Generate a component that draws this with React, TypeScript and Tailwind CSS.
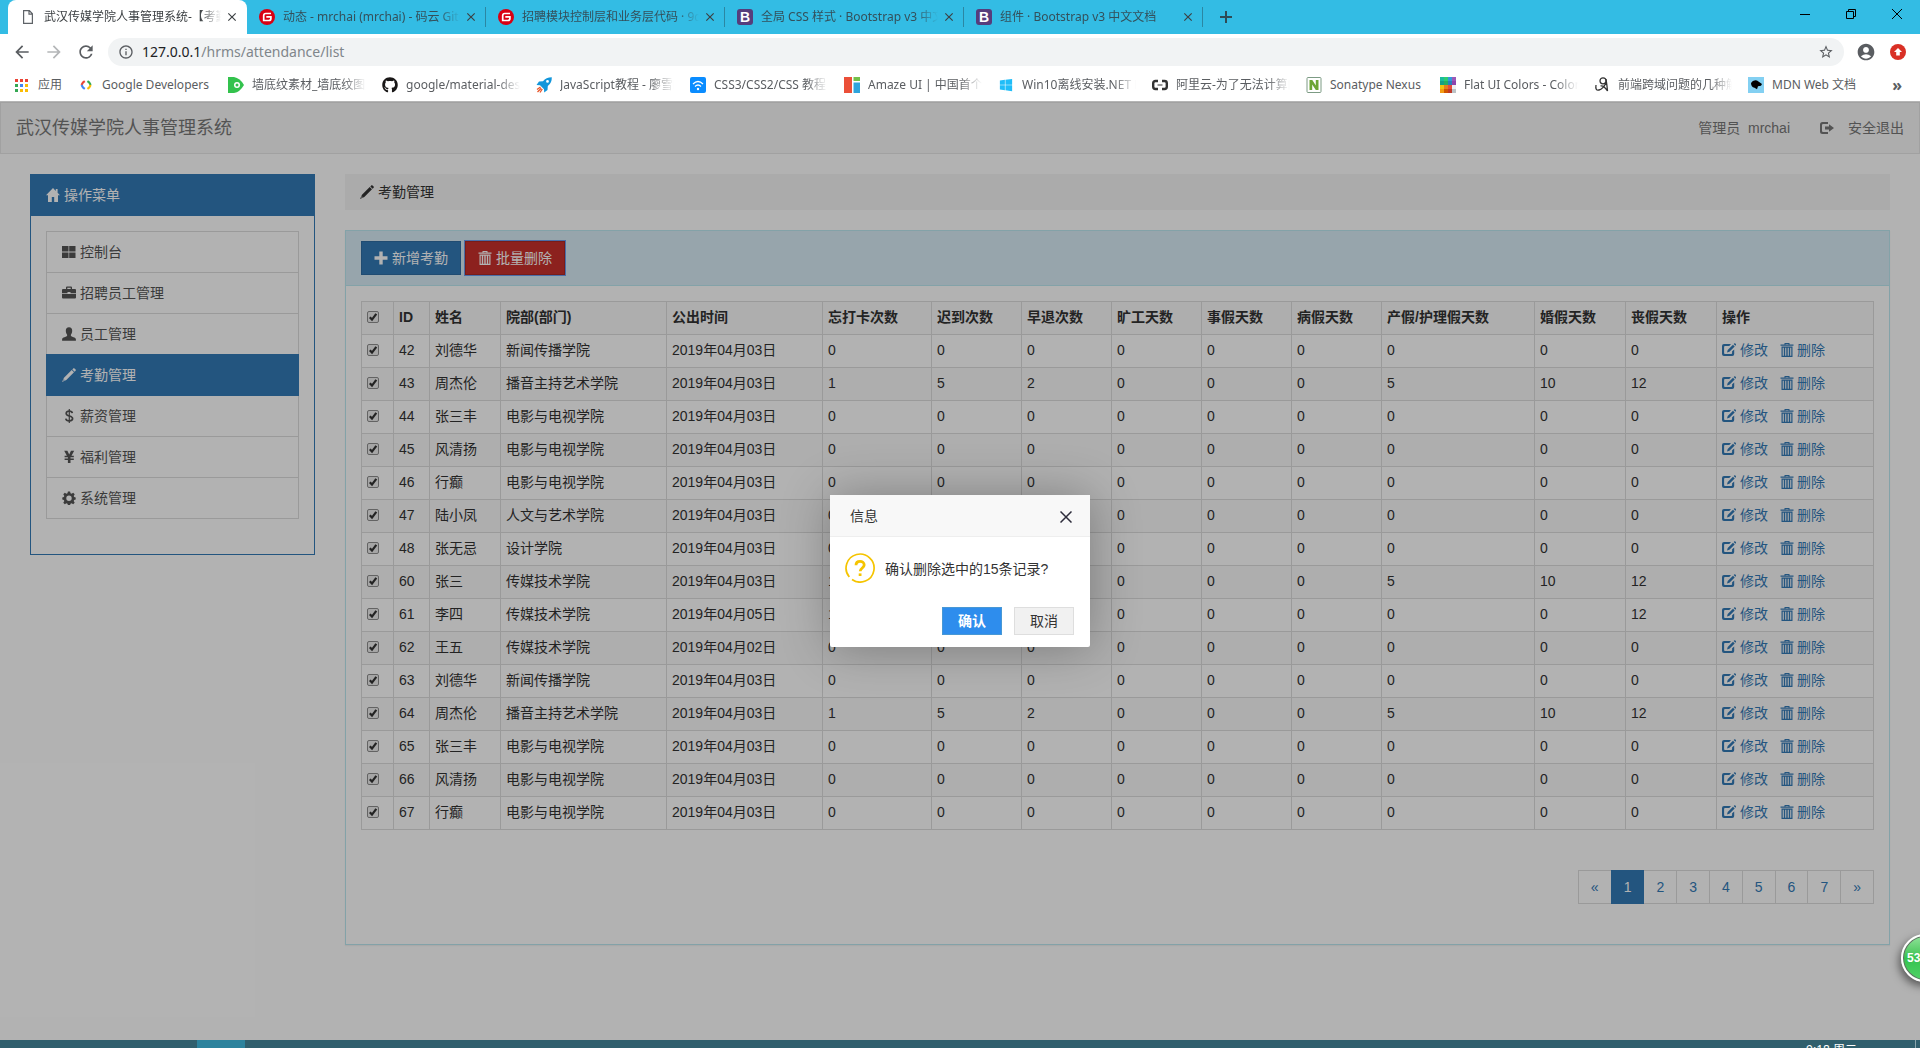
import type { ReactNode } from "react";
import { FaGithub, FaWindows } from "react-icons/fa";
import { MdAccountCircle, MdArrowBack, MdArrowForward, MdClose, MdInfoOutline, MdRefresh, MdStarBorder } from "react-icons/md";

/* ---------- icons ---------- */

function Glyph({ children, className = "" }: { children: ReactNode; className?: string }) {
  return (
    <svg viewBox="0 0 14 14" className={`inline-block size-3.5 shrink-0 ${className}`} fill="currentColor" aria-hidden="true">
      {children}
    </svg>
  );
}

const HomeIcon = () => (
  <Glyph>
    <path d="M7 0 0 7.2h2V14h3.800V9h2.400v5H12V7.200h2L11.600 4.700V1H9.800v1.900z" />
  </Glyph>
);
const GridIcon = () => (
  <Glyph>
    <path d="M0 1h6.500v5.600H0zM7.200 1H13.500v5.600H7.200zM0 7.400h6.500V13H0zM7.200 7.400H13.500V13H7.200z" />
  </Glyph>
);
const BriefcaseIcon = () => (
  <Glyph>
    <path d="M4 3V1.500Q4 .5 5 .5h4q1 0 1 1V3h3q1 0 1 1v3.200H8.500V6h-3v1.200H0V4q0-1 1-1zm1.300 0h3.400V1.700H5.300zM0 8h14v3.500q0 1-1 1H1q-1 0-1-1z" />
  </Glyph>
);
const UserIcon = () => (
  <Glyph>
    <path d="M7 .2c2.200 0 3.200 1.400 3.200 3.600 0 2-.8 3.200-1.300 4v1.300c.8.9 4.800 1.300 5 3.200V13.700H.1V12.300c.2-1.900 4.200-2.300 5-3.200V7.800C4.600 7 3.800 5.800 3.800 3.800 3.800 1.600 4.800.2 7 .2z" />
  </Glyph>
);
const PencilIcon = () => (
  <Glyph>
    <path d="M11.300.4q.6-.6 1.200 0l1.100 1.100q.6.6 0 1.200l-1 1-2.300-2.300zM9.700 2 12 4.300 4.300 12 0 14l2-4.300zM1.800 11.300l-.6 1.500 1.500-.6z" />
  </Glyph>
);
const CogIcon = () => (
  <Glyph>
    <path
      fillRule="evenodd"
      d="M5.900.5h2.200l.4 1.800 1.100.5 1.600-1 1.500 1.500-1 1.600.5 1.100 1.500.4v2.200l-1.500.4-.5 1.100 1 1.600-1.500 1.500-1.600-1-1.100.5-.4 1.300H5.900l-.4-1.300-1.100-.5-1.600 1-1.500-1.500 1-1.600-.5-1.100L.3 8.600V6.400L1.800 6l.5-1.100-1-1.600 1.500-1.500 1.600 1 1.100-.5zM7 4.500a2.700 2.700 0 1 0 0 5.400 2.700 2.700 0 1 0 0-5.400z"
    />
  </Glyph>
);
const DollarIcon = () => (
  <Glyph>
    <g fill="none" stroke="currentColor" strokeWidth="1.700">
      <path d="M10.300 4.200C10.100 2.800 9 2.100 7.200 2.100S4.200 3 4.200 4.400C4.200 7.800 10.600 6.200 10.600 9.600c0 1.400-1.200 2.300-3.200 2.300S4 11.200 3.800 9.600" />
      <path d="M7.300 0v14" strokeWidth="1.200" />
    </g>
  </Glyph>
);
const YenIcon = () => (
  <Glyph>
    <path d="M2.200.8h3.200L7.200 4.500 9 .8h3.200L9.500 5.800h2.300V7.300H8.500v1.100h3.300v1.500H8.500V13H5.900V9.900H2.600V8.400h3.300V7.300H2.600V5.800h2.300z" />
  </Glyph>
);
const PlusIcon = () => (
  <Glyph>
    <path d="M5.300.5h3.400v4.800H13.500v3.400H8.700V13.500H5.300V8.700H.5V5.300h4.800z" />
  </Glyph>
);
const TrashIcon = () => (
  <Glyph>
    <path fillRule="evenodd" d="M4.500 0h5v1.500H13.500v1.200H.5V1.500h4zM5.500.9v.6h3V.9zM1.500 3.600h11V14h-11zM2.700 4.800v8h1.100v-8zm2.500 0v8h1.100v-8zm2.500 0v8h1.100v-8zm2.500 0v8h1.100v-8z" />
  </Glyph>
);
const EditIcon = () => (
  <Glyph>
    <path d="M2 1h7L7.300 3H3q-.9 0-.9.900v6.200q0 .9.900.9h6.200q.9 0 .9-.9V8.300L12.200 6.500V11q0 2-2 2H2q-2 0-2-2V3q0-2 2-2z" />
    <path d="M11 1.800 12.700 3.500 7.400 8.800 5 9.500l.7-2.400zM11.700 1.100l.8-.8q.3-.3.600 0l1 1q.3.300 0 .6l-.8.800z" />
  </Glyph>
);
const LogOutIcon = () => (
  <Glyph>
    <path d="M2.500 1H8v2H3.200Q2 3 2 4v6q0 1 1.200 1H8v2H2.500Q0 13 0 10.500v-7Q0 1 2.500 1z" />
    <path d="M9 3.200 14 7l-5 3.800V8.500H5v-3h4z" />
  </Glyph>
);

function GiteeIcon() {
  return (
    <svg viewBox="0 0 16 16" className="size-4" aria-hidden="true">
      <circle cx="8" cy="8" r="8" fill="#d90013" />
      <path d="M12 4.500H6.800Q4.700 4.500 4.700 6.600V11.500h5.200q2 0 2-2V7.800H7.300" fill="none" stroke="#fff" strokeWidth="1.700" />
    </svg>
  );
}

function BootstrapIcon() {
  return (
    <span className="grid size-4 place-items-center rounded-[3px] bg-[#563d7c] font-['Liberation_Sans',sans-serif] text-sm leading-4 font-bold text-white">
      B
    </span>
  );
}

function FileIcon() {
  return (
    <svg viewBox="0 0 16 16" className="size-4" fill="none" stroke="#5f6368" strokeWidth="1.200" aria-hidden="true">
      <path d="M3.600 1.600h5.800L12.400 4.800v9.600H3.600zM9 1.600V5.200h3.400" />
    </svg>
  );
}

/* bookmark favicons */
const appColors = ["#ea4335", "#ea4335", "#ea4335", "#34a853", "#4285f4", "#fbbc05", "#34a853", "#fbbc05", "#fbbc05"];
const flatColors = [
  "#1abc9c", "#2ecc71", "#3498db", "#9b59b6",
  "#16a085", "#27ae60", "#2980b9", "#8e44ad",
  "#f1c40f", "#e67e22", "#e74c3c", "#ecf0f1",
  "#f39c12", "#d35400", "#c0392b", "#bdc3c7",
];

function Favicon({ children }: { children: ReactNode }) {
  return (
    <svg viewBox="0 0 16 16" className="size-4 shrink-0" aria-hidden="true">
      {children}
    </svg>
  );
}

const bookmarks: { label: string; width: string; icon: ReactNode; short?: boolean }[] = [
  {
    label: "应用",
    width: "w-16",
    short: true,
    icon: (
      <Favicon>
        {appColors.map((c, i) => (
          <rect key={i} x={1 + (i % 3) * 5} y={2 + Math.floor(i / 3) * 5} width="3" height="3" fill={c} />
        ))}
      </Favicon>
    ),
  },
  {
    label: "Google Developers",
    width: "w-[150px]",
    short: true,
    icon: (
      <Favicon>
        <g fill="none" strokeWidth="2.200">
          <path d="M6.800 4.200 5 5.400 3.500 8" stroke="#ea4335" />
          <path d="M3.500 8 5 10.600l1.800 1.200" stroke="#4285f4" />
          <path d="M9.400 4.200 11.200 5.400 12.700 8" stroke="#34a853" />
          <path d="M12.700 8l-1.500 2.600-1.800 1.200" stroke="#fbbc05" />
        </g>
      </Favicon>
    ),
  },
  {
    label: "墙底纹素材_墙底纹图片",
    width: "w-[154px]",
    icon: (
      <Favicon>
        <path d="M0 0h6q6 1 10 8-4 7-10 8H0z" fill="#33c24d" />
        <circle cx="9" cy="8" r="3" fill="#fff" />
        <circle cx="9" cy="8" r="1.500" fill="#33c24d" />
      </Favicon>
    ),
  },
  { label: "google/material-design", width: "w-[154px]", icon: <FaGithub className="size-4 shrink-0 text-[#191717]" /> },
  {
    label: "JavaScript教程 - 廖雪峰",
    width: "w-[154px]",
    icon: (
      <Favicon>
        <path fillRule="evenodd" d="M15.800.2Q10 .2 7 4.200L3 4.500.500 8l3.500.2 4 4L8.200 15.500 11.500 13l.3-4Q16 6 15.800.2zM11.500 3a1.400 1.400 0 1 1 0 2.800 1.400 1.400 0 1 1 0-2.800z" fill="#1296db" />
        <path d="M4.500 10 1 12.500M5.300 11.200 1.500 15M6.300 12 4 15.500" stroke="#e8562a" strokeWidth="1.300" />
      </Favicon>
    ),
  },
  {
    label: "CSS3/CSS2/CSS 教程",
    width: "w-[154px]",
    icon: (
      <Favicon>
        <rect width="16" height="16" rx="2" fill="#0a8cff" />
        <g fill="none" stroke="#fff" strokeWidth="1.200">
          <path d="M3 7q5-5 10 0M5 9.500q3-3 6 0" />
        </g>
        <circle cx="8" cy="12" r="1.200" fill="#fff" />
      </Favicon>
    ),
  },
  {
    label: "Amaze UI | 中国首个开源",
    width: "w-[154px]",
    icon: (
      <Favicon>
        <path d="M0 0h8v16H0z" fill="#eb4f38" />
        <path d="M9.500 0H16v4H9.500z" fill="#72c04a" />
        <path d="M9.500 5.500H16V16H9.500z" fill="#2fa4dc" />
      </Favicon>
    ),
  },
  { label: "Win10离线安装.NET Fr", width: "w-[154px]", icon: <FaWindows className="size-4 shrink-0 p-px text-[#20bdf8]" /> },
  {
    label: "阿里云-为了无法计算的",
    width: "w-[154px]",
    icon: (
      <Favicon>
        <path d="M6 4H3.500Q1.200 4 1.200 6.200v3.600Q1.200 12 3.500 12H6M10 4h2.500q2.300 0 2.300 2.200v3.600q0 2.200-2.300 2.200H10" fill="none" stroke="#333" strokeWidth="2.400" />
        <path d="M5.500 7.500h5v1h-5z" fill="#333" />
      </Favicon>
    ),
  },
  {
    label: "Sonatype Nexus",
    width: "w-[134px]",
    short: true,
    icon: (
      <Favicon>
        <rect x="1" y=".5" width="14" height="15" rx="1" fill="#fff" stroke="#7c9b84" />
        <path d="M3.500 13V3h2.800l3.500 5.500V3h2.700v10H9.800L6.200 7.500V13z" fill="#6da536" />
      </Favicon>
    ),
  },
  {
    label: "Flat UI Colors - Color",
    width: "w-[154px]",
    icon: (
      <Favicon>
        {flatColors.map((c, i) => (
          <rect key={i} x={(i % 4) * 4} y={Math.floor(i / 4) * 4} width="4" height="4" fill={c} />
        ))}
      </Favicon>
    ),
  },
  {
    label: "前端跨域问题的几种解决",
    width: "w-[154px]",
    icon: (
      <Favicon>
        <g fill="none" stroke="#333" strokeWidth="1.300">
          <circle cx="9" cy="3.800" r="3" />
          <path d="M12 2q1 6 1.500 12-4-6-7-5M2 8q-1 6 3 5t7-7" />
        </g>
      </Favicon>
    ),
  },
  {
    label: "MDN Web 文档",
    width: "w-[130px]",
    short: true,
    icon: (
      <Favicon>
        <rect width="16" height="16" fill="#83d0f2" />
        <path d="M3 6q2-3.500 6-2.500l5 3.500-1 1.800-3 .4-1 3-2.500-1.500Q3 10 3 6z" fill="#000" />
      </Favicon>
    ),
  },
];

/* ---------- browser window ---------- */

const tabs: { title: string; icon: ReactNode; active?: boolean }[] = [
  { title: "武汉传媒学院人事管理系统-【考勤管理】", icon: <FileIcon />, active: true },
  { title: "动态 - mrchai (mrchai) - 码云 Gitee", icon: <GiteeIcon /> },
  { title: "招聘模块控制层和业务层代码 · 9d2", icon: <GiteeIcon /> },
  { title: "全局 CSS 样式 · Bootstrap v3 中文", icon: <BootstrapIcon /> },
  { title: "组件 · Bootstrap v3 中文文档", icon: <BootstrapIcon /> },
];

function BrowserBar() {
  return (
    <header className="border-b border-[#b5b5b5] bg-white font-['Noto_Sans','Noto_Sans_CJK_SC',sans-serif] text-xs text-[#5a5d61]">
      <div className="flex h-[34px] bg-[#33bce4] pl-2">
        {tabs.map((tab) => (
          <div
            key={tab.title}
            className={
              tab.active
                ? "flex w-[239px] items-center rounded-t-lg bg-white pl-3 text-[#3c4043]"
                : "flex w-[239px] items-center pl-3 text-[#34505b]"
            }
          >
            {tab.icon}
            <span className="ml-2 w-[177px] overflow-hidden whitespace-nowrap [mask-image:linear-gradient(to_right,#000_88%,transparent)]">
              {tab.title}
            </span>
            <button type="button" aria-label="关闭标签页" className="ml-1 text-[#3c4043]">
              <MdClose className="size-3.5" />
            </button>
            {!tab.active && <span className="ml-auto h-5 w-px bg-[#2b87a3]" />}
          </div>
        ))}
        <button type="button" aria-label="新标签页" className="ml-4 text-[#2f4b55]">
          <svg viewBox="0 0 14 14" className="size-3.5" stroke="currentColor" strokeWidth="2">
            <path d="M7 1v12M1 7h12" />
          </svg>
        </button>
        <div className="ml-auto flex h-7 text-black">
          <button type="button" aria-label="最小化" className="grid w-[46px] place-items-center">
            <svg viewBox="0 0 10 10" className="size-2.5" stroke="currentColor">
              <path d="M0 5.500h10" />
            </svg>
          </button>
          <button type="button" aria-label="还原" className="grid w-[46px] place-items-center">
            <svg viewBox="0 0 10 10" className="size-2.5" fill="none" stroke="currentColor">
              <path d="M.5 2.500h7v7h-7zM2.500 2.500v-2h7v7h-2" />
            </svg>
          </button>
          <button type="button" aria-label="关闭" className="grid w-[46px] place-items-center">
            <svg viewBox="0 0 10 10" className="size-2.5" stroke="currentColor">
              <path d="M0 0l10 10M10 0 0 10" />
            </svg>
          </button>
        </div>
      </div>

      <div className="flex h-9 items-center pr-3.5 pl-3">
        <button type="button" aria-label="后退" className="mr-3">
          <MdArrowBack className="size-5" />
        </button>
        <button type="button" aria-label="前进" className="mr-3 text-[#b4b6b8]">
          <MdArrowForward className="size-5" />
        </button>
        <button type="button" aria-label="刷新" className="mr-3">
          <MdRefresh className="size-5" />
        </button>
        <div className="flex h-7 flex-1 items-center rounded-full bg-[#f1f3f4] px-2.5">
          <MdInfoOutline className="mr-2 size-4" />
          <p className="flex-1 text-sm text-[#80868b]">
            <span className="text-[#202124]">127.0.0.1</span>/hrms/attendance/list
          </p>
          <MdStarBorder className="size-4" />
        </div>
        <MdAccountCircle className="ml-3 size-5" />
        <svg viewBox="0 0 16 16" className="ml-3.5 size-4">
          <circle cx="8" cy="8" r="8" fill="#d93025" />
          <path d="M8 4l4 4H9.800v3.500H6.200V8H4z" fill="#fff" />
        </svg>
      </div>

      <div className="flex h-[31px] items-center pb-0.5 pl-3.5">
        {bookmarks.map((b) => (
          <a key={b.label} href="#" className={`flex shrink-0 items-center ${b.width}`}>
            {b.icon}
            <span
              className={
                b.short
                  ? "ml-2 whitespace-nowrap"
                  : "ml-2 w-[114px] overflow-hidden whitespace-nowrap [mask-image:linear-gradient(to_right,#000_80%,transparent)]"
              }
            >
              {b.label}
            </span>
          </a>
        ))}
        <span className="ml-auto pr-[18px] text-base leading-4 font-bold">»</span>
      </div>
    </header>
  );
}

/* ---------- page ---------- */

const menu = [
  { label: "控制台", icon: <GridIcon /> },
  { label: "招聘员工管理", icon: <BriefcaseIcon /> },
  { label: "员工管理", icon: <UserIcon /> },
  { label: "考勤管理", icon: <PencilIcon />, active: true },
  { label: "薪资管理", icon: <DollarIcon /> },
  { label: "福利管理", icon: <YenIcon /> },
  { label: "系统管理", icon: <CogIcon /> },
];

const columns = [
  { title: "ID", width: "w-9" },
  { title: "姓名", width: "w-[71px]" },
  { title: "院部(部门)", width: "w-[166px]" },
  { title: "公出时间", width: "w-[156px]" },
  { title: "忘打卡次数", width: "w-[109px]" },
  { title: "迟到次数", width: "w-[90px]" },
  { title: "早退次数", width: "w-[90px]" },
  { title: "旷工天数", width: "w-[90px]" },
  { title: "事假天数", width: "w-[90px]" },
  { title: "病假天数", width: "w-[90px]" },
  { title: "产假/护理假天数", width: "w-[153px]" },
  { title: "婚假天数", width: "w-[91px]" },
  { title: "丧假天数", width: "w-[91px]" },
  { title: "操作", width: "w-[157px]" },
];

const none = [0, 0, 0, 0, 0, 0, 0, 0, 0];
const some = [1, 5, 2, 0, 0, 0, 5, 10, 12];

const records: { id: number; name: string; dept: string; date: string; counts: number[] }[] = [
  { id: 42, name: "刘德华", dept: "新闻传播学院", date: "2019年04月03日", counts: none },
  { id: 43, name: "周杰伦", dept: "播音主持艺术学院", date: "2019年04月03日", counts: some },
  { id: 44, name: "张三丰", dept: "电影与电视学院", date: "2019年04月03日", counts: none },
  { id: 45, name: "风清扬", dept: "电影与电视学院", date: "2019年04月03日", counts: none },
  { id: 46, name: "行癫", dept: "电影与电视学院", date: "2019年04月03日", counts: none },
  { id: 47, name: "陆小凤", dept: "人文与艺术学院", date: "2019年04月03日", counts: none },
  { id: 48, name: "张无忌", dept: "设计学院", date: "2019年04月03日", counts: none },
  { id: 60, name: "张三", dept: "传媒技术学院", date: "2019年04月03日", counts: some },
  { id: 61, name: "李四", dept: "传媒技术学院", date: "2019年04月05日", counts: [1, 0, 0, 0, 0, 0, 0, 0, 12] },
  { id: 62, name: "王五", dept: "传媒技术学院", date: "2019年04月02日", counts: none },
  { id: 63, name: "刘德华", dept: "新闻传播学院", date: "2019年04月03日", counts: none },
  { id: 64, name: "周杰伦", dept: "播音主持艺术学院", date: "2019年04月03日", counts: some },
  { id: 65, name: "张三丰", dept: "电影与电视学院", date: "2019年04月03日", counts: none },
  { id: 66, name: "风清扬", dept: "电影与电视学院", date: "2019年04月03日", counts: none },
  { id: 67, name: "行癫", dept: "电影与电视学院", date: "2019年04月03日", counts: none },
];

function Checkbox({ label }: { label: string }) {
  return (
    <label className="grid size-3">
      <input
        type="checkbox"
        defaultChecked
        aria-label={label}
        className="peer col-start-1 row-start-1 size-3 appearance-none rounded-[2px] border border-[#8f8f8f] bg-[#ececec]"
      />
      <svg viewBox="0 0 12 12" className="invisible col-start-1 row-start-1 size-3 peer-checked:visible" fill="none" stroke="#333" strokeWidth="2.200">
        <path d="M2.800 6.200 5 8.600 9.300 2.800" />
      </svg>
    </label>
  );
}

function AttendanceTable() {
  return (
    <table className="mb-10 w-full table-fixed border-collapse border border-[#ddd] text-left">
      <thead>
        <tr className="bg-[#f9f9f9]">
          <th className="w-8 border border-[#ddd] px-[5px] pt-[5px] pb-[7px]">
            <Checkbox label="全选" />
          </th>
          {columns.map((c) => (
            <th key={c.title} className={`border border-[#ddd] px-[5px] pt-[5px] pb-[7px] font-bold ${c.width}`}>
              {c.title}
            </th>
          ))}
        </tr>
      </thead>
      <tbody>
        {records.map((r) => (
          <tr key={r.id} className="even:bg-[#f9f9f9]">
            <td className="border border-[#ddd] px-[5px] pt-[5px] pb-[7px]">
              <Checkbox label={`选择 ${r.id}`} />
            </td>
            <td className="border border-[#ddd] px-[5px] pt-[5px] pb-[7px]">{r.id}</td>
            <td className="border border-[#ddd] px-[5px] pt-[5px] pb-[7px]">{r.name}</td>
            <td className="border border-[#ddd] px-[5px] pt-[5px] pb-[7px]">{r.dept}</td>
            <td className="border border-[#ddd] px-[5px] pt-[5px] pb-[7px]">{r.date}</td>
            {r.counts.map((n, i) => (
              <td key={i} className="border border-[#ddd] px-[5px] pt-[5px] pb-[7px]">
                {n}
              </td>
            ))}
            <td className="border border-[#ddd] px-[5px] pt-[5px] pb-[7px]">
              <div className="flex gap-3 text-[#337ab7]">
                <a href="#" className="flex items-center gap-1">
                  <EditIcon />
                  修改
                </a>
                <a href="#" className="flex items-center gap-[3px]">
                  <TrashIcon />
                  删除
                </a>
              </div>
            </td>
          </tr>
        ))}
      </tbody>
    </table>
  );
}

function Pagination() {
  return (
    <nav aria-label="分页" className="my-5 flex justify-end">
      <ul className="flex border-l border-[#ddd] text-[#337ab7]">
        {["«", "1", "2", "3", "4", "5", "6", "7", "»"].map((p) => (
          <li key={p}>
            <a
              href="#"
              className={
                p === "1"
                  ? "-ml-px block border border-[#337ab7] bg-[#337ab7] px-3 py-1.5 text-white"
                  : "block border-y border-r border-[#ddd] px-3 py-1.5"
              }
            >
              {p}
            </a>
          </li>
        ))}
      </ul>
    </nav>
  );
}

function ConfirmDialog() {
  return (
    <div role="dialog" aria-label="信息" className="w-[260px] rounded-[2px] bg-white shadow-[1px_1px_50px_rgba(0,0,0,0.3)]">
      <div className="flex h-[42px] items-center justify-between border-b border-[#eee] bg-[#f8f8f8] pr-[18px] pl-5">
        <span>信息</span>
        <button type="button" aria-label="关闭" className="pt-0.5">
          <svg viewBox="0 0 12 12" className="size-3" stroke="#2d2c3b" strokeWidth="1.500">
            <path d="M.5.5l11 11M11.500.5l-11 11" />
          </svg>
        </button>
      </div>
      <div className="flex items-center gap-2.5 px-[15px] pt-4">
        <svg viewBox="0 0 30 30" className="size-[30px]" fill="none" stroke="#f5c400">
          <path d="M4.300 24A14 14 0 1 1 7 26.500" strokeWidth="1.700" />
          <path d="M11 12.200C11 9.500 12.800 8.300 15 8.300s4.200 1.400 4.200 3.700c0 2.900-4 3.200-4 6.300" strokeWidth="2.800" />
          <path d="M13.700 20.400h2.800v2.600h-2.800z" fill="#f5c400" stroke="none" />
        </svg>
        <span className="pt-px">确认删除选中的15条记录?</span>
      </div>
      <div className="flex justify-end gap-3 px-4 pt-6 pb-3">
        <button type="button" className="h-7 w-[60px] border border-[#4898d5] bg-[#2e8ded] font-bold text-white">
          确认
        </button>
        <button type="button" className="h-7 w-[60px] border border-[#dedede] bg-[#f1f1f1]">
          取消
        </button>
      </div>
    </div>
  );
}

export default function App() {
  return (
    <div className="flex min-h-screen flex-col overflow-x-hidden">
      <BrowserBar />

      <div className="relative flex-1 overflow-hidden bg-white font-['Liberation_Sans','Noto_Sans_CJK_SC',sans-serif] text-sm leading-5 text-[#333]">
        {/* Navbar */}
        <nav className="mb-5 flex h-[52px] items-center justify-between border border-[#e7e7e7] bg-[#f8f8f8] px-[15px] text-[#777]">
          <a href="#" className="text-lg">
            武汉传媒学院人事管理系统
          </a>
          <div className="flex items-center">
            <a href="#" className="mr-[30px]">
              管理员&nbsp; mrchai
            </a>
            <a href="#" className="flex items-center gap-3.5">
              <LogOutIcon />
              安全退出
            </a>
          </div>
        </nav>

        <div className="grid grid-cols-12 items-start gap-x-[30px] px-[30px] pb-5">
          {/* Sidebar */}
          <aside className="col-span-2 border border-[#337ab7] bg-white">
            <h3 className="flex h-[41px] items-center gap-1 bg-[#337ab7] px-[15px] pb-0.5 text-white">
              <HomeIcon />
              操作菜单
            </h3>
            <ul className="mx-[15px] mt-[15px] mb-[35px] border border-[#ddd]">
              {menu.map((m) => (
                <li key={m.label} className="border-b border-[#ddd] last:border-b-0">
                  <a
                    href="#"
                    className={
                      m.active
                        ? "-m-px flex h-[42px] items-center gap-1 bg-[#337ab7] px-4 text-white"
                        : "flex h-10 items-center gap-1 px-[15px] text-[#555]"
                    }
                  >
                    {m.icon}
                    {m.label}
                  </a>
                </li>
              ))}
            </ul>
          </aside>

          {/* Content */}
          <main className="col-span-10">
            <div className="mb-5 flex h-9 items-center gap-1 bg-[#f5f5f5] px-[15px]">
              <PencilIcon />
              考勤管理
            </div>

            <section className="border border-[#bce8f1] shadow-[0_1px_1px_rgba(0,0,0,0.05)]">
              <div className="flex gap-1 border-b border-[#bce8f1] bg-[#d9edf7] px-[15px] py-2.5 text-white">
                <button type="button" className="flex h-[34px] items-center gap-1 border border-[#2e6da4] bg-[#337ab7] px-3">
                  <PlusIcon />
                  新增考勤
                </button>
                <button
                  type="button"
                  className="flex h-[34px] items-center gap-1 border border-[#ac2925] bg-[#c9302c] px-3 ring-1 ring-[#6c9cf0]"
                >
                  <TrashIcon />
                  批量删除
                </button>
              </div>
              <div className="px-[15px] pt-[15px] pb-5">
                <AttendanceTable />
                <Pagination />
              </div>
            </section>
          </main>
        </div>

        {/* Modal */}
        <div className="absolute inset-0 flex items-center justify-center bg-black/30">
          <ConfirmDialog />
        </div>

        {/* Floating speed ball */}
        <div className="absolute -right-[29px] bottom-[58px] flex size-12 items-center rounded-full border-2 border-white bg-linear-to-b from-[#8fe39a] via-[#35c24f] to-[#4fd366] pl-1 text-xs font-bold text-white shadow-[-2px_4px_8px_rgba(0,0,0,0.5)] ring-1 ring-[#666] ring-inset">
          53%
        </div>
      </div>

      {/* Taskbar */}
      <footer className="flex h-2 overflow-hidden bg-[#305f6d] font-['Noto_Sans','Noto_Sans_CJK_SC',sans-serif] text-xs text-white">
        <div className="ml-[197px] w-12 bg-[#2d839d]" />
        <span className="mt-0.5 mr-[58px] ml-auto">9:18 周二</span>
        <span className="mr-1 w-px bg-[#8aa5ad]" />
      </footer>
    </div>
  );
}
